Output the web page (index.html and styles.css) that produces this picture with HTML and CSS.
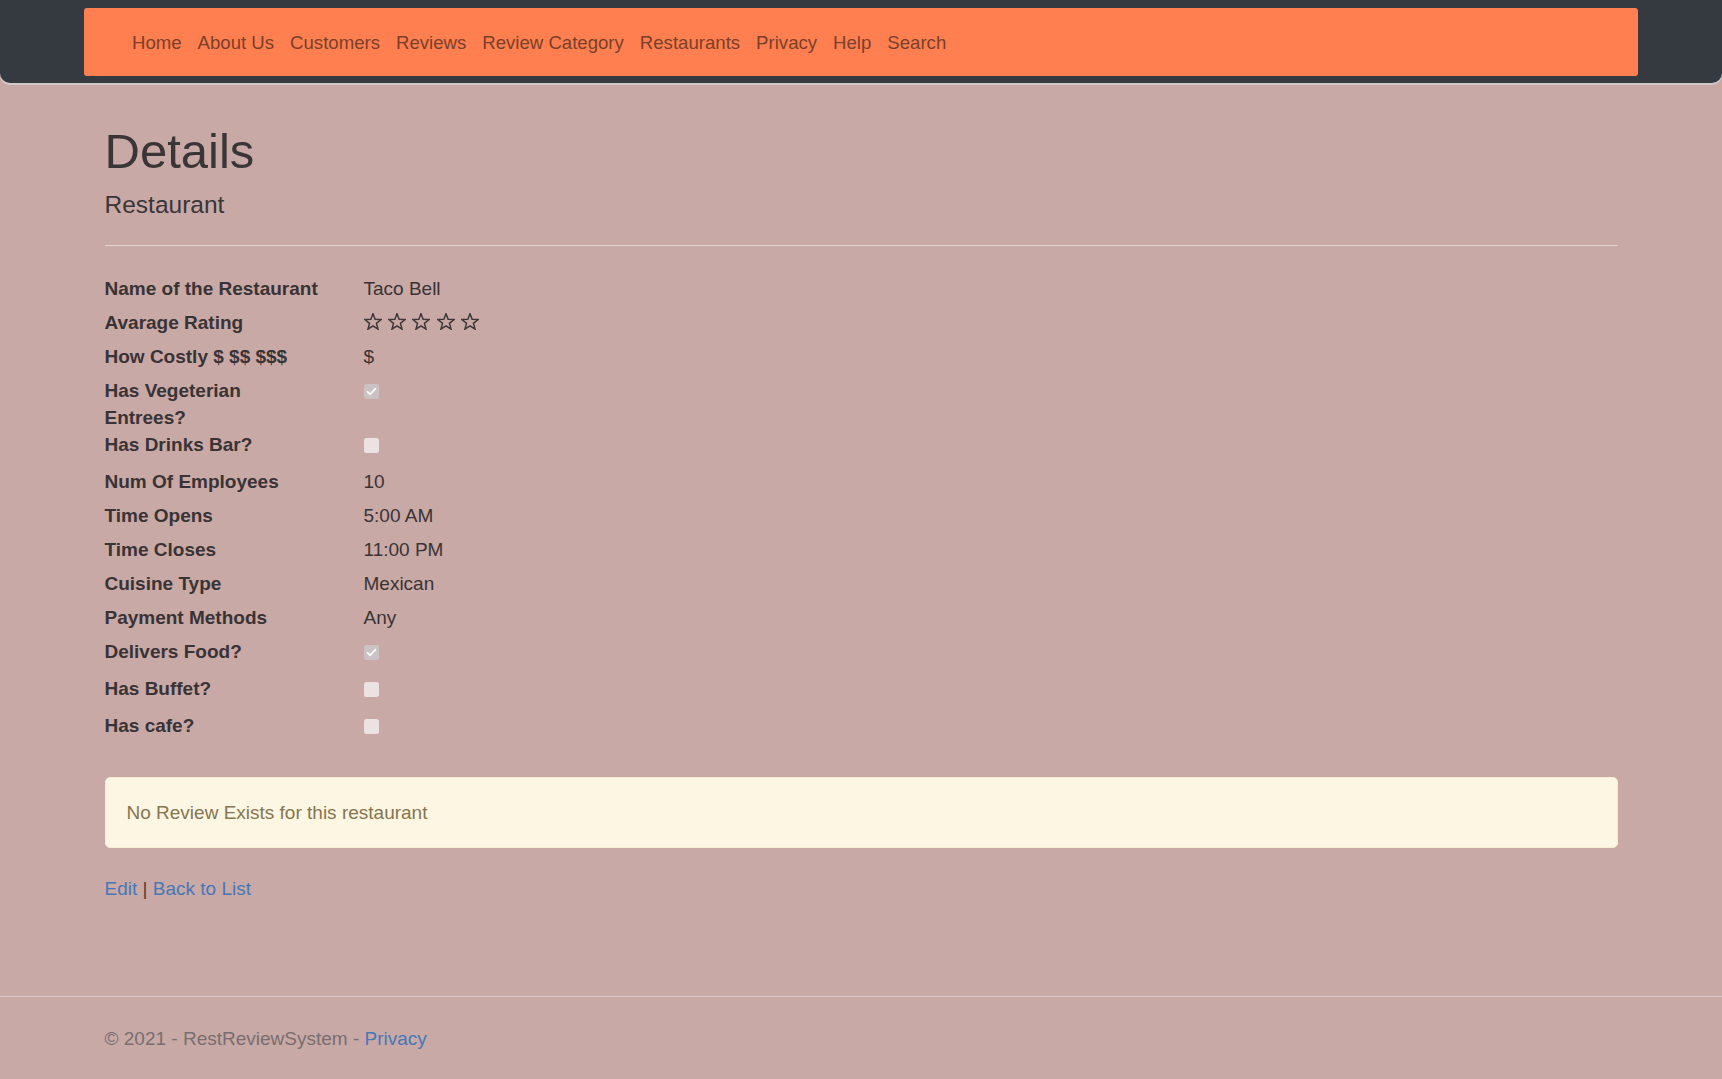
FILE: index.html
```html
<!DOCTYPE html>
<html lang="en">
<head>
<meta charset="utf-8">
<title>Details - RestReviewSystem</title>
<link rel="stylesheet" href="styles.css">
</head>
<body>
<header class="topbar">
  <nav class="navbox">
    <ul class="navlist">
      <li><a class="navlink" href="#">Home</a></li>
      <li><a class="navlink" href="#">About Us</a></li>
      <li><a class="navlink" href="#">Customers</a></li>
      <li><a class="navlink" href="#">Reviews</a></li>
      <li><a class="navlink" href="#">Review Category</a></li>
      <li><a class="navlink" href="#">Restaurants</a></li>
      <li><a class="navlink" href="#">Privacy</a></li>
      <li><a class="navlink" href="#">Help</a></li>
      <li><a class="navlink" href="#">Search</a></li>
    </ul>
  </nav>
</header>

<main class="main">
  <div class="container">
    <h1 class="title">Details</h1>
    <h4 class="subtitle">Restaurant</h4>
    <hr class="rule">
    <dl class="details">
      <dt>Name of the Restaurant</dt>
      <dd>Taco Bell</dd>

      <dt>Avarage Rating</dt>
      <dd class="stars">
        <svg class="star" viewBox="0 0 18 17" width="18" height="17"><polygon points="9,0.7 11.12,6.29 17.18,6.54 12.42,10.31 14.06,16.16 9,12.8 3.94,16.16 5.58,10.31 0.82,6.54 6.88,6.29"/></svg>
        <svg class="star" viewBox="0 0 18 17" width="18" height="17"><polygon points="9,0.7 11.12,6.29 17.18,6.54 12.42,10.31 14.06,16.16 9,12.8 3.94,16.16 5.58,10.31 0.82,6.54 6.88,6.29"/></svg>
        <svg class="star" viewBox="0 0 18 17" width="18" height="17"><polygon points="9,0.7 11.12,6.29 17.18,6.54 12.42,10.31 14.06,16.16 9,12.8 3.94,16.16 5.58,10.31 0.82,6.54 6.88,6.29"/></svg>
        <svg class="star" viewBox="0 0 18 17" width="18" height="17"><polygon points="9,0.7 11.12,6.29 17.18,6.54 12.42,10.31 14.06,16.16 9,12.8 3.94,16.16 5.58,10.31 0.82,6.54 6.88,6.29"/></svg>
        <svg class="star" viewBox="0 0 18 17" width="18" height="17"><polygon points="9,0.7 11.12,6.29 17.18,6.54 12.42,10.31 14.06,16.16 9,12.8 3.94,16.16 5.58,10.31 0.82,6.54 6.88,6.29"/></svg>
      </dd>

      <dt>How Costly $ $$ $$$</dt>
      <dd>$</dd>

      <dt>Has Vegeterian Entrees?</dt>
      <dd class="check"><span class="cb cb-on"><svg viewBox="0 0 15 15" width="15" height="15"><path d="M3.6 7.8 L6.2 10.3 L11.4 4.6"/></svg></span></dd>

      <dt>Has Drinks Bar?</dt>
      <dd class="check"><span class="cb"></span></dd>

      <dt>Num Of Employees</dt>
      <dd>10</dd>

      <dt>Time Opens</dt>
      <dd>5:00 AM</dd>

      <dt>Time Closes</dt>
      <dd>11:00 PM</dd>

      <dt>Cuisine Type</dt>
      <dd>Mexican</dd>

      <dt>Payment Methods</dt>
      <dd>Any</dd>

      <dt>Delivers Food?</dt>
      <dd class="check"><span class="cb cb-on"><svg viewBox="0 0 15 15" width="15" height="15"><path d="M3.6 7.8 L6.2 10.3 L11.4 4.6"/></svg></span></dd>

      <dt>Has Buffet?</dt>
      <dd class="check"><span class="cb"></span></dd>

      <dt>Has cafe?</dt>
      <dd class="check"><span class="cb"></span></dd>
    </dl>

    <div class="alert">No Review Exists for this restaurant</div>

    <p class="actions"><a class="link" href="#">Edit</a> | <a class="link" href="#">Back to List</a></p>
  </div>
</main>

<footer class="footer">
  <div class="container">&copy; 2021 - RestReviewSystem - <a class="link" href="#">Privacy</a></div>
</footer>
</body>
</html>
```

FILE: styles.css
```css
html, body {
  margin: 0;
  padding: 0;
}

body {
  min-height: 100vh;
  display: flex;
  flex-direction: column;
  background: #c8a9a6;
  color: #3a3335;
  font-family: "Liberation Sans", Arial, sans-serif;
  font-size: 19px;
  line-height: 27px;
}

.topbar {
  background: #353a40;
  padding: 8px 0 7px;
  border-radius: 0 0 10px 10px;
  box-shadow: 0 2px 0 #d2caca;
}

.navbox {
  width: 1554px;
  height: 68px;
  margin: 0 auto;
  background: #ff7f50;
  border-radius: 3px;
  display: flex;
  align-items: center;
}

.navlist {
  list-style: none;
  margin: 0;
  padding: 0 0 0 40px;
  display: flex;
  font-size: 18.6px;
}

.navlink {
  display: block;
  padding: 0 8px;
  color: #7a3f2a;
  text-decoration: none;
}

.main {
  flex: 1;
}

.container {
  width: 1513px;
  margin: 0 auto;
}

.title {
  margin: 40px 0 10.5px;
  font-size: 49px;
  line-height: 57px;
  font-weight: 400;
  color: #3a3536;
}

.subtitle {
  margin: 0;
  font-size: 24.5px;
  line-height: 28.8px;
  font-weight: 400;
  color: #3a3536;
}

.rule {
  margin: 26px 0 29px;
  border: 0;
  border-top: 1px solid #e4d3d2;
  height: 0;
}

.details {
  display: grid;
  grid-template-columns: 259px 1fr;
  margin: 0 0 28px;
}

.details dt {
  font-weight: 700;
  padding-right: 38px;
  margin: 0;
}

.details dd {
  margin: 0 0 7px;
}

.details dd.check {
  height: 30px;
  padding-top: 7px;
  box-sizing: border-box;
}

.stars {
  display: flex;
  gap: 6.4px;
  height: 27px;
  padding-top: 4px;
  box-sizing: border-box;
}

.star {
  display: block;
  fill: none;
  stroke: #3d3537;
  stroke-width: 1.45;
  stroke-linejoin: miter;
}

.cb {
  display: block;
  width: 15px;
  height: 15px;
  border-radius: 2.5px;
  background: #ede2e2;
}

.cb-on {
  background: #cbc3c3;
}

.cb-on svg {
  display: block;
  fill: none;
  stroke: #ffffff;
  stroke-width: 1.7;
  stroke-linecap: round;
  stroke-linejoin: round;
}

.alert {
  background: #fdf6e3;
  border: 1px solid #f6edd3;
  border-radius: 5px;
  padding: 21px 21px;
  color: #86754f;
}

.actions {
  margin: 27px 0 0;
  color: #5a3a33;
}

.link {
  color: #4877b8;
  text-decoration: none;
}

.footer {
  border-top: 1px solid #d9c9c8;
  padding: 28px 0 27px;
  color: #786e70;
}
```
